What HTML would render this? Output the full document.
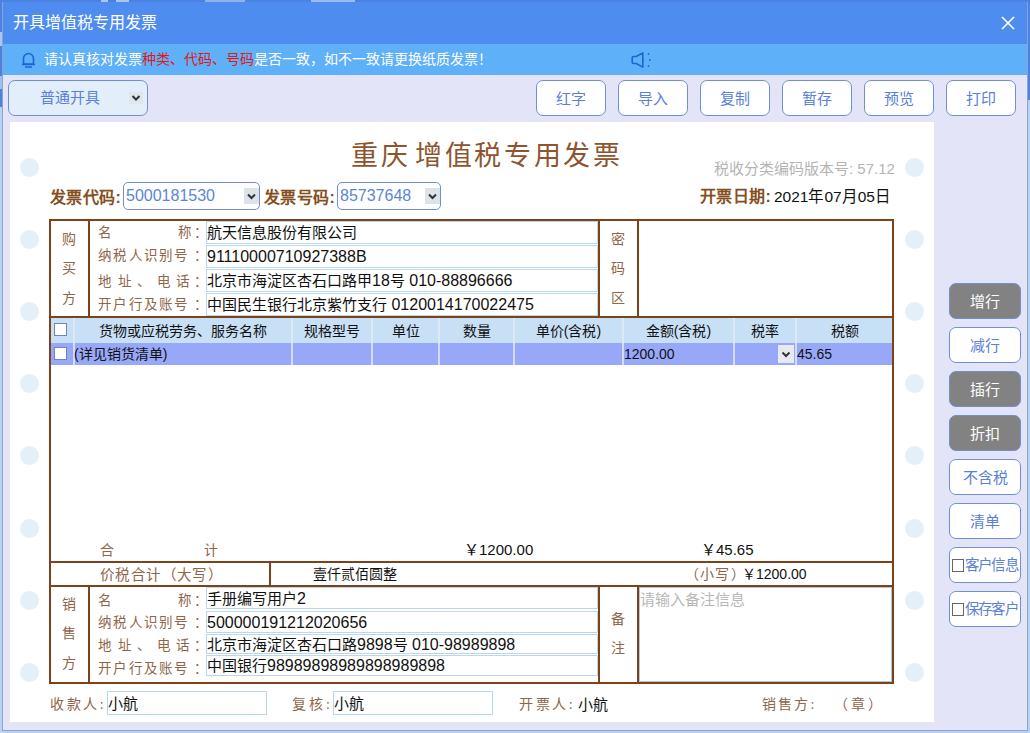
<!DOCTYPE html>
<html lang="zh-CN">
<head>
<meta charset="utf-8">
<style>
*{box-sizing:border-box;margin:0;padding:0}
html,body{width:1030px;height:733px;overflow:hidden;background:#b6d3f6;font-family:"Liberation Sans",sans-serif}
.a{position:absolute}
#top{left:0;top:0;width:1030px;height:3px;background:#4b82e2}
#win{left:2px;top:2px;width:1026px;height:729px;background:#e4e4f8;overflow:hidden;border:1px solid #8ea4cc;border-top:0}
#title{left:0;top:0;width:1024px;height:42px;background:#4f8cf0;color:#fff;font-size:16px;line-height:41px;padding-left:10px}
#notice{left:0;top:42px;width:1024px;height:31px;background:#5eb0f8;color:#fff;font-size:14px;line-height:31px}
.red{color:#e01818}
.tb{border:1px solid #6f8fd8;border-radius:7px;background:#fff;color:#5a80d8;font-size:15px;text-align:center;line-height:36px;height:36px;width:70px;top:78px}
#paper{left:7px;top:120px;width:925px;height:600px;background:#fff}
.hole{width:19px;height:19px;border-radius:50%;background:#e3f0fa}
.k{font-family:"Liberation Serif",serif;color:#7e4a26}
.bd{background:#a0500f}
.inp{border:1px solid #b9d7ee;background:#fff;font-size:16px;color:#111;line-height:21px;padding-left:1px;white-space:nowrap;overflow:hidden}
.rb{left:946px;width:72px;height:36px;border:1px solid #6f8fd8;border-radius:7px;font-size:15px;line-height:35px;text-align:center;white-space:nowrap;overflow:hidden}
.gray{background:#828282;color:#fff}
.wht{background:#fff;color:#5a80d8}
.hd{top:318px;height:25px;background:#c8e0f6;font-size:14px;color:#111;line-height:25px;text-align:center}
.dr{top:343px;height:22px;background:#98a8f8;font-size:14px;color:#111;line-height:22px}
.sep{width:2px;background:#e8f0fa}
</style>
</head>
<body>
<div id="top" class="a"></div>
<div class="a" style="left:101px;top:0;width:7px;height:2px;background:#a9c4f0"></div><div class="a" style="left:116px;top:0;width:13px;height:2px;background:#a9c4f0"></div>
<div class="a" style="left:205px;top:0;width:40px;height:2px;background:#8fb2ec"></div>
<div class="a" style="left:311px;top:0;width:44px;height:2px;background:#9bbaee"></div>
<div class="a" style="left:0;top:0;width:3px;height:107px;background:#4b82e2"></div>
<div class="a" style="left:0;top:32px;width:2px;height:14px;background:#a8c8f4"></div>
<div class="a" style="left:0;top:76px;width:2px;height:13px;background:#9dbff0"></div>
<div class="a" style="left:1027px;top:0;width:3px;height:100px;background:#4b82e2"></div>
<div id="win" class="a">
  <div id="title" class="a">开具增值税专用发票</div>
  <svg class="a" style="left:997px;top:13px" width="16" height="16" viewBox="0 0 16 16"><path d="M2 2L14 14M14 2L2 14" stroke="#fff" stroke-width="1.6"/></svg>
  <div id="notice" class="a">
    <svg class="a" style="left:18px;top:8px" width="15" height="16" viewBox="0 0 15 16"><path d="M2.5 12V6.5A5 5 0 0 1 12.5 6.5V12Z" fill="none" stroke="#1f64d0" stroke-width="1.6" stroke-linejoin="round"/><path d="M1 12.5H14M4 15H11" stroke="#1f64d0" stroke-width="1.5"/></svg>
    <span class="a" style="left:41px;top:0">请认真核对发票<span class="red">种类、代码、号码</span>是否一致，如不一致请更换纸质发票！</span>
    <svg class="a" style="left:625px;top:8px" width="24" height="16" viewBox="0 0 24 16"><path d="M5.5 4.5H8.2L14.8 0.9V15.1L8.2 11.5H5.5Q4.2 11.5 4.2 10V6Q4.2 4.5 5.5 4.5Z" fill="none" stroke="#1f64d0" stroke-width="1.6" stroke-linejoin="round"/><path d="M14.8 6.5V9.5" stroke="#1f64d0" stroke-width="1"/><circle cx="20.5" cy="2" r="0.9" fill="#1f64d0"/><circle cx="21.8" cy="8" r="0.9" fill="#1f64d0"/><circle cx="20.5" cy="14" r="0.9" fill="#1f64d0"/></svg>
  </div>

  <!-- toolbar -->
  <div class="a" style="left:5px;top:78px;width:140px;height:36px;border:1px solid #6f8fd8;border-radius:7px;background:#e2eefa;color:#5a80d8;font-size:15px;line-height:34px;padding-left:31px">普通开具
    <svg class="a" style="left:120px;top:11px" width="14" height="12" viewBox="0 0 14 12"><rect x="0" y="0" width="14" height="12" fill="#dfe6ee"/><path d="M3.5 4L7 7.5L10.5 4" fill="none" stroke="#333" stroke-width="2"/></svg>
  </div>
  <div class="a tb" style="left:533px">红字</div>
  <div class="a tb" style="left:615px">导入</div>
  <div class="a tb" style="left:697px">复制</div>
  <div class="a tb" style="left:779px">暂存</div>
  <div class="a tb" style="left:861px">预览</div>
  <div class="a tb" style="left:943px">打印</div>

  <!-- right buttons -->
  <div class="a rb gray" style="top:281px">增行</div>
  <div class="a rb wht" style="top:325px">减行</div>
  <div class="a rb gray" style="top:369px">插行</div>
  <div class="a rb gray" style="top:413px">折扣</div>
  <div class="a rb wht" style="top:457px">不含税</div>
  <div class="a rb wht" style="top:501px">清单</div>
  <div class="a rb wht" style="top:545px;font-size:14.5px;text-align:left;padding-left:2px;letter-spacing:-0.8px"><span style="display:inline-block;width:12px;height:13px;border:1px solid #666;vertical-align:-2px;background:#fff;margin-right:1px"></span>客户信息</div>
  <div class="a rb wht" style="top:589px;font-size:14.5px;text-align:left;padding-left:2px;letter-spacing:-0.8px"><span style="display:inline-block;width:12px;height:13px;border:1px solid #666;vertical-align:-2px;background:#fff;margin-right:1px"></span>保存客户</div>
</div>

<!-- paper (absolute page coords) -->
<div id="paper" class="a" style="left:10px;top:122px;width:924px;height:600px"></div>
<div id="inv" class="a" style="left:0;top:0;width:1030px;height:733px">
<div class="a hole" style="left:20.0px;top:157.5px"></div>
<div class="a hole" style="left:904.5px;top:157.5px"></div>
<div class="a hole" style="left:20.0px;top:229.7px"></div>
<div class="a hole" style="left:904.5px;top:229.7px"></div>
<div class="a hole" style="left:20.0px;top:301.9px"></div>
<div class="a hole" style="left:904.5px;top:301.9px"></div>
<div class="a hole" style="left:20.0px;top:374.1px"></div>
<div class="a hole" style="left:904.5px;top:374.1px"></div>
<div class="a hole" style="left:20.0px;top:446.3px"></div>
<div class="a hole" style="left:904.5px;top:446.3px"></div>
<div class="a hole" style="left:20.0px;top:518.5px"></div>
<div class="a hole" style="left:904.5px;top:518.5px"></div>
<div class="a hole" style="left:20.0px;top:590.7px"></div>
<div class="a hole" style="left:904.5px;top:590.7px"></div>
<div class="a hole" style="left:20.0px;top:662.9px"></div>
<div class="a hole" style="left:904.5px;top:662.9px"></div>
<div class="a k" style="left:351px;top:137px;font-size:27px;line-height:38px;letter-spacing:2.6px;color:#8e5430;white-space:nowrap">重庆<span style="display:inline-block;width:5px"></span>增值税专用发票</div>
<div class="a " style="left:714px;top:157.5px;font-size:15px;line-height:21px;color:#b4b4b4;white-space:nowrap;">税收分类编码版本号: 57.12</div>
<div class="a " style="left:50px;top:186.5px;font-size:16px;line-height:22px;color:#85501f;white-space:nowrap;font-weight:bold;letter-spacing:0.4px">发票代码:</div>
<div class="a" style="left:123px;top:182px;width:137px;height:28px;border:1px solid #6f8fd8;border-radius:5px;background:#fff;color:#5a86d8;font-size:16px;line-height:26px;padding-left:2px">5000181530<svg class="a" style="left:120px;top:5px" width="15" height="16" viewBox="0 0 15 16"><rect width="15" height="16" fill="#dde3ea"/><path d="M4 6.5L7.5 10L11 6.5" fill="none" stroke="#333" stroke-width="2"/></svg></div>
<div class="a " style="left:264px;top:186.5px;font-size:16px;line-height:22px;color:#85501f;white-space:nowrap;font-weight:bold;letter-spacing:0.4px">发票号码:</div>
<div class="a" style="left:337px;top:182px;width:104px;height:28px;border:1px solid #6f8fd8;border-radius:5px;background:#fff;color:#5a86d8;font-size:16px;line-height:26px;padding-left:2px">85737648<svg class="a" style="left:87px;top:5px" width="15" height="16" viewBox="0 0 15 16"><rect width="15" height="16" fill="#dde3ea"/><path d="M4 6.5L7.5 10L11 6.5" fill="none" stroke="#333" stroke-width="2"/></svg></div>
<div class="a " style="left:700px;top:186.0px;font-size:16px;line-height:22px;color:#85501f;white-space:nowrap;font-weight:bold;letter-spacing:0.4px">开票日期:</div>
<div class="a " style="left:774px;top:186.2px;font-size:15.5px;line-height:21.5px;color:#111;white-space:nowrap;">2021年07月05日</div>
<div class="a" style="left:206px;top:221px;width:392px;height:23px;border:1px solid #b9d7ee;background:#fff"></div>
<div class="a " style="left:207px;top:222.2px;font-size:15.5px;line-height:21.5px;color:#111;white-space:nowrap;"><span style="font-size:15px">航天信息股份有限公司</span></div>
<div class="a" style="left:206px;top:245px;width:392px;height:23px;border:1px solid #b9d7ee;background:#fff"></div>
<div class="a " style="left:207px;top:246.2px;font-size:15.5px;line-height:21.5px;color:#111;white-space:nowrap;"><span style="font-size:16px">91110000710927388B</span></div>
<div class="a" style="left:206px;top:269px;width:392px;height:23px;border:1px solid #b9d7ee;background:#fff"></div>
<div class="a " style="left:207px;top:270.2px;font-size:15.5px;line-height:21.5px;color:#111;white-space:nowrap;"><span style="font-size:15px">北京市海淀区杏石口路甲</span><span style="font-size:16px">18</span><span style="font-size:15px">号</span><span style="font-size:16px"> 010-88896666</span></div>
<div class="a" style="left:206px;top:293px;width:392px;height:23px;border:1px solid #b9d7ee;background:#fff"></div>
<div class="a " style="left:207px;top:294.2px;font-size:15.5px;line-height:21.5px;color:#111;white-space:nowrap;"><span style="font-size:15px">中国民生银行北京紫竹支行</span><span style="font-size:16px"> 0120014170022475</span></div>
<div class="a" style="left:206px;top:587px;width:392px;height:22px;border:1px solid #b9d7ee;background:#fff"></div>
<div class="a " style="left:207px;top:587.8px;font-size:15.5px;line-height:21.5px;color:#111;white-space:nowrap;"><span style="font-size:15px">手册编写用户</span><span style="font-size:16px">2</span></div>
<div class="a" style="left:206px;top:611px;width:392px;height:22px;border:1px solid #b9d7ee;background:#fff"></div>
<div class="a " style="left:207px;top:611.8px;font-size:15.5px;line-height:21.5px;color:#111;white-space:nowrap;"><span style="font-size:16px">500000191212020656</span></div>
<div class="a" style="left:206px;top:634px;width:392px;height:20px;border:1px solid #b9d7ee;background:#fff"></div>
<div class="a " style="left:207px;top:633.8px;font-size:15.5px;line-height:21.5px;color:#111;white-space:nowrap;"><span style="font-size:15px">北京市海淀区杏石口路</span><span style="font-size:16px">9898</span><span style="font-size:15px">号</span><span style="font-size:16px"> 010-98989898</span></div>
<div class="a" style="left:206px;top:655px;width:392px;height:21px;border:1px solid #b9d7ee;background:#fff"></div>
<div class="a " style="left:207px;top:655.2px;font-size:15.5px;line-height:21.5px;color:#111;white-space:nowrap;"><span style="font-size:15px">中国银行</span><span style="font-size:16px">98989898989898989898</span></div>
<div class="a" style="left:639px;top:587px;width:253px;height:95px;border:1px solid #a9c9de;background:#fff"></div>
<div class="a " style="left:640px;top:588.5px;font-size:15px;line-height:21px;color:#b8b8b8;white-space:nowrap;">请输入备注信息</div>
<div class="a k" style="left:97.5px;top:222.5px;font-size:13.5px;line-height:20px;color:#8e664a">名</div>
<div class="a k" style="left:177.5px;top:222.5px;font-size:13.5px;line-height:20px;color:#8e664a">称</div>
<div class="a k" style="left:193.5px;top:222.5px;font-size:13.5px;line-height:20px;color:#8e664a">：</div>
<div class="a k" style="left:97.5px;top:246px;font-size:13.5px;line-height:20px;color:#8e664a">纳</div>
<div class="a k" style="left:113.0px;top:246px;font-size:13.5px;line-height:20px;color:#8e664a">税</div>
<div class="a k" style="left:128.5px;top:246px;font-size:13.5px;line-height:20px;color:#8e664a">人</div>
<div class="a k" style="left:143.5px;top:246px;font-size:13.5px;line-height:20px;color:#8e664a">识</div>
<div class="a k" style="left:158.5px;top:246px;font-size:13.5px;line-height:20px;color:#8e664a">别</div>
<div class="a k" style="left:173.5px;top:246px;font-size:13.5px;line-height:20px;color:#8e664a">号</div>
<div class="a k" style="left:193.5px;top:246px;font-size:13.5px;line-height:20px;color:#8e664a">：</div>
<div class="a k" style="left:97.5px;top:271.5px;font-size:13.5px;line-height:20px;color:#8e664a">地</div>
<div class="a k" style="left:117.5px;top:271.5px;font-size:13.5px;line-height:20px;color:#8e664a">址</div>
<div class="a k" style="left:136.5px;top:271.5px;font-size:13.5px;line-height:20px;color:#8e664a">、</div>
<div class="a k" style="left:156.5px;top:271.5px;font-size:13.5px;line-height:20px;color:#8e664a">电</div>
<div class="a k" style="left:175.5px;top:271.5px;font-size:13.5px;line-height:20px;color:#8e664a">话</div>
<div class="a k" style="left:193.5px;top:271.5px;font-size:13.5px;line-height:20px;color:#8e664a">：</div>
<div class="a k" style="left:97.5px;top:295px;font-size:13.5px;line-height:20px;color:#8e664a">开</div>
<div class="a k" style="left:113.0px;top:295px;font-size:13.5px;line-height:20px;color:#8e664a">户</div>
<div class="a k" style="left:128.5px;top:295px;font-size:13.5px;line-height:20px;color:#8e664a">行</div>
<div class="a k" style="left:143.5px;top:295px;font-size:13.5px;line-height:20px;color:#8e664a">及</div>
<div class="a k" style="left:158.5px;top:295px;font-size:13.5px;line-height:20px;color:#8e664a">账</div>
<div class="a k" style="left:173.5px;top:295px;font-size:13.5px;line-height:20px;color:#8e664a">号</div>
<div class="a k" style="left:193.5px;top:295px;font-size:13.5px;line-height:20px;color:#8e664a">：</div>
<div class="a k" style="left:97.5px;top:590.5px;font-size:13.5px;line-height:20px;color:#8e664a">名</div>
<div class="a k" style="left:177.5px;top:590.5px;font-size:13.5px;line-height:20px;color:#8e664a">称</div>
<div class="a k" style="left:193.5px;top:590.5px;font-size:13.5px;line-height:20px;color:#8e664a">：</div>
<div class="a k" style="left:97.5px;top:612.5px;font-size:13.5px;line-height:20px;color:#8e664a">纳</div>
<div class="a k" style="left:113.0px;top:612.5px;font-size:13.5px;line-height:20px;color:#8e664a">税</div>
<div class="a k" style="left:128.5px;top:612.5px;font-size:13.5px;line-height:20px;color:#8e664a">人</div>
<div class="a k" style="left:143.5px;top:612.5px;font-size:13.5px;line-height:20px;color:#8e664a">识</div>
<div class="a k" style="left:158.5px;top:612.5px;font-size:13.5px;line-height:20px;color:#8e664a">别</div>
<div class="a k" style="left:173.5px;top:612.5px;font-size:13.5px;line-height:20px;color:#8e664a">号</div>
<div class="a k" style="left:193.5px;top:612.5px;font-size:13.5px;line-height:20px;color:#8e664a">：</div>
<div class="a k" style="left:97.5px;top:636px;font-size:13.5px;line-height:20px;color:#8e664a">地</div>
<div class="a k" style="left:117.5px;top:636px;font-size:13.5px;line-height:20px;color:#8e664a">址</div>
<div class="a k" style="left:136.5px;top:636px;font-size:13.5px;line-height:20px;color:#8e664a">、</div>
<div class="a k" style="left:156.5px;top:636px;font-size:13.5px;line-height:20px;color:#8e664a">电</div>
<div class="a k" style="left:175.5px;top:636px;font-size:13.5px;line-height:20px;color:#8e664a">话</div>
<div class="a k" style="left:193.5px;top:636px;font-size:13.5px;line-height:20px;color:#8e664a">：</div>
<div class="a k" style="left:97.5px;top:659px;font-size:13.5px;line-height:20px;color:#8e664a">开</div>
<div class="a k" style="left:113.0px;top:659px;font-size:13.5px;line-height:20px;color:#8e664a">户</div>
<div class="a k" style="left:128.5px;top:659px;font-size:13.5px;line-height:20px;color:#8e664a">行</div>
<div class="a k" style="left:143.5px;top:659px;font-size:13.5px;line-height:20px;color:#8e664a">及</div>
<div class="a k" style="left:158.5px;top:659px;font-size:13.5px;line-height:20px;color:#8e664a">账</div>
<div class="a k" style="left:173.5px;top:659px;font-size:13.5px;line-height:20px;color:#8e664a">号</div>
<div class="a k" style="left:193.5px;top:659px;font-size:13.5px;line-height:20px;color:#8e664a">：</div>
<div class="a k" style="left:62px;top:230px;font-size:14px;line-height:20px;color:#8e664a">购</div>
<div class="a k" style="left:62px;top:259px;font-size:14px;line-height:20px;color:#8e664a">买</div>
<div class="a k" style="left:62px;top:289px;font-size:14px;line-height:20px;color:#8e664a">方</div>
<div class="a k" style="left:611px;top:230px;font-size:14px;line-height:20px;color:#8e664a">密</div>
<div class="a k" style="left:611px;top:259px;font-size:14px;line-height:20px;color:#8e664a">码</div>
<div class="a k" style="left:611px;top:289px;font-size:14px;line-height:20px;color:#8e664a">区</div>
<div class="a k" style="left:62px;top:595px;font-size:14px;line-height:20px;color:#8e664a">销</div>
<div class="a k" style="left:62px;top:624px;font-size:14px;line-height:20px;color:#8e664a">售</div>
<div class="a k" style="left:62px;top:654px;font-size:14px;line-height:20px;color:#8e664a">方</div>
<div class="a k" style="left:611px;top:610px;font-size:14px;line-height:20px;color:#8e664a">备</div>
<div class="a k" style="left:611px;top:639px;font-size:14px;line-height:20px;color:#8e664a">注</div>
<div class="a" style="left:51px;top:318px;width:841px;height:25px;background:#c8e0f6;"></div>
<div class="a" style="left:51px;top:343px;width:841px;height:22px;background:#98a8f8;"></div>
<div class="a" style="left:73px;top:318px;width:2px;height:25px;background:#dce8f6;"></div>
<div class="a" style="left:73px;top:343px;width:2px;height:22px;background:#d4dcfa;"></div>
<div class="a" style="left:291px;top:318px;width:2px;height:25px;background:#dce8f6;"></div>
<div class="a" style="left:291px;top:343px;width:2px;height:22px;background:#d4dcfa;"></div>
<div class="a" style="left:371px;top:318px;width:2px;height:25px;background:#dce8f6;"></div>
<div class="a" style="left:371px;top:343px;width:2px;height:22px;background:#d4dcfa;"></div>
<div class="a" style="left:438px;top:318px;width:2px;height:25px;background:#dce8f6;"></div>
<div class="a" style="left:438px;top:343px;width:2px;height:22px;background:#d4dcfa;"></div>
<div class="a" style="left:513px;top:318px;width:2px;height:25px;background:#dce8f6;"></div>
<div class="a" style="left:513px;top:343px;width:2px;height:22px;background:#d4dcfa;"></div>
<div class="a" style="left:622px;top:318px;width:2px;height:25px;background:#dce8f6;"></div>
<div class="a" style="left:622px;top:343px;width:2px;height:22px;background:#d4dcfa;"></div>
<div class="a" style="left:733px;top:318px;width:2px;height:25px;background:#dce8f6;"></div>
<div class="a" style="left:733px;top:343px;width:2px;height:22px;background:#d4dcfa;"></div>
<div class="a" style="left:795px;top:318px;width:2px;height:25px;background:#dce8f6;"></div>
<div class="a" style="left:795px;top:343px;width:2px;height:22px;background:#d4dcfa;"></div>
<div class="a " style="left:74.0px;top:321.0px;width:218px;text-align:center;font-size:14px;line-height:20px;color:#111;white-space:nowrap;">货物或应税劳务、服务名称</div>
<div class="a " style="left:292.0px;top:321.0px;width:80px;text-align:center;font-size:14px;line-height:20px;color:#111;white-space:nowrap;">规格型号</div>
<div class="a " style="left:372.0px;top:321.0px;width:67px;text-align:center;font-size:14px;line-height:20px;color:#111;white-space:nowrap;">单位</div>
<div class="a " style="left:439.0px;top:321.0px;width:75px;text-align:center;font-size:14px;line-height:20px;color:#111;white-space:nowrap;">数量</div>
<div class="a " style="left:514.0px;top:321.0px;width:109px;text-align:center;font-size:14px;line-height:20px;color:#111;white-space:nowrap;">单价(含税)</div>
<div class="a " style="left:623.0px;top:321.0px;width:111px;text-align:center;font-size:14px;line-height:20px;color:#111;white-space:nowrap;">金额(含税)</div>
<div class="a " style="left:734.0px;top:321.0px;width:62px;text-align:center;font-size:14px;line-height:20px;color:#111;white-space:nowrap;">税率</div>
<div class="a " style="left:796.0px;top:321.0px;width:97px;text-align:center;font-size:14px;line-height:20px;color:#111;white-space:nowrap;">税额</div>
<div class="a" style="left:54px;top:323px;width:13px;height:13px;border:1px solid #6c86b8;background:#fff"></div>
<div class="a" style="left:54px;top:347px;width:13px;height:13px;border:1px solid #6c86b8;background:#fff"></div>
<div class="a " style="left:74px;top:344.0px;font-size:14px;line-height:20px;color:#111;white-space:nowrap;">(详见销货清单)</div>
<div class="a " style="left:624px;top:344.0px;font-size:14px;line-height:20px;color:#111;white-space:nowrap;">1200.00</div>
<div class="a " style="left:797px;top:344.0px;font-size:14px;line-height:20px;color:#111;white-space:nowrap;">45.65</div>
<svg class="a" style="left:778px;top:345px" width="16" height="18" viewBox="0 0 16 18"><rect width="16" height="18" fill="#e6ebf2"/><path d="M4.5 7.5L8 11L11.5 7.5" fill="none" stroke="#333" stroke-width="2"/></svg>
<div class="a k" style="left:100px;top:541px;font-size:14px;line-height:20px;color:#8e664a">合</div>
<div class="a k" style="left:204px;top:541px;font-size:14px;line-height:20px;color:#8e664a">计</div>
<div class="a " style="left:464px;top:538.5px;font-size:15px;line-height:21px;color:#111;white-space:nowrap;">￥1200.00</div>
<div class="a " style="left:701px;top:538.5px;font-size:15px;line-height:21px;color:#111;white-space:nowrap;">￥45.65</div>
<div class="a k" style="left:100px;top:565.2px;font-size:14.5px;line-height:20.5px;color:#8e664a;white-space:nowrap;letter-spacing:1.4px">价税合计（大写）</div>
<div class="a " style="left:313px;top:564.0px;font-size:14px;line-height:20px;color:#111;white-space:nowrap;">壹仟贰佰圆整</div>
<div class="a k" style="left:685px;top:565.0px;font-size:14px;line-height:20px;color:#8e664a;white-space:nowrap;letter-spacing:1.2px">（小写）</div>
<div class="a " style="left:742px;top:564.0px;font-size:14px;line-height:20px;color:#111;white-space:nowrap;">￥1200.00</div>
<div class="a k" style="left:50px;top:695.0px;font-size:14px;line-height:20px;color:#8e664a;white-space:nowrap;letter-spacing:2.6px">收款人:</div>
<div class="a" style="left:107px;top:691px;width:160px;height:24px;border:1px solid #b9d7ee;background:#fff"></div>
<div class="a " style="left:108px;top:692.8px;font-size:15.5px;line-height:21.5px;color:#111;white-space:nowrap;"><span style="font-size:15px">小航</span></div>
<div class="a k" style="left:292px;top:695.0px;font-size:14px;line-height:20px;color:#8e664a;white-space:nowrap;letter-spacing:3px">复核:</div>
<div class="a" style="left:333px;top:691px;width:160px;height:24px;border:1px solid #b9d7ee;background:#fff"></div>
<div class="a " style="left:334px;top:692.8px;font-size:15.5px;line-height:21.5px;color:#111;white-space:nowrap;"><span style="font-size:15px">小航</span></div>
<div class="a k" style="left:519px;top:695.0px;font-size:14px;line-height:20px;color:#8e664a;white-space:nowrap;letter-spacing:2.6px">开票人:</div>
<div class="a " style="left:578px;top:693.5px;font-size:15px;line-height:21px;color:#111;white-space:nowrap;">小航</div>
<div class="a k" style="left:762px;top:695.0px;font-size:14px;line-height:20px;color:#8e664a;white-space:nowrap;letter-spacing:2.2px">销售方:</div>
<div class="a k" style="left:834px;top:695.0px;font-size:14px;line-height:20px;color:#8e664a;white-space:nowrap;letter-spacing:2.8px">（章）</div>
<div class="a" style="left:49px;top:219px;width:845px;height:2px;background:#7d4219;"></div>
<div class="a" style="left:49px;top:219px;width:2px;height:465px;background:#7d4219;"></div>
<div class="a" style="left:892px;top:219px;width:2px;height:465px;background:#7d4219;"></div>
<div class="a" style="left:49px;top:682px;width:845px;height:2px;background:#7d4219;"></div>
<div class="a" style="left:49px;top:316px;width:845px;height:2px;background:#7d4219;"></div>
<div class="a" style="left:49px;top:561px;width:845px;height:2px;background:#7d4219;"></div>
<div class="a" style="left:49px;top:585px;width:845px;height:2px;background:#7d4219;"></div>
<div class="a" style="left:88px;top:219px;width:2px;height:99px;background:#7d4219;"></div>
<div class="a" style="left:598px;top:219px;width:2px;height:99px;background:#7d4219;"></div>
<div class="a" style="left:637px;top:219px;width:2px;height:99px;background:#7d4219;"></div>
<div class="a" style="left:269px;top:561px;width:2px;height:26px;background:#7d4219;"></div>
<div class="a" style="left:88px;top:585px;width:2px;height:99px;background:#7d4219;"></div>
<div class="a" style="left:598px;top:585px;width:2px;height:99px;background:#7d4219;"></div>
<div class="a" style="left:637px;top:585px;width:2px;height:99px;background:#7d4219;"></div>
</div>
</body>
</html>
